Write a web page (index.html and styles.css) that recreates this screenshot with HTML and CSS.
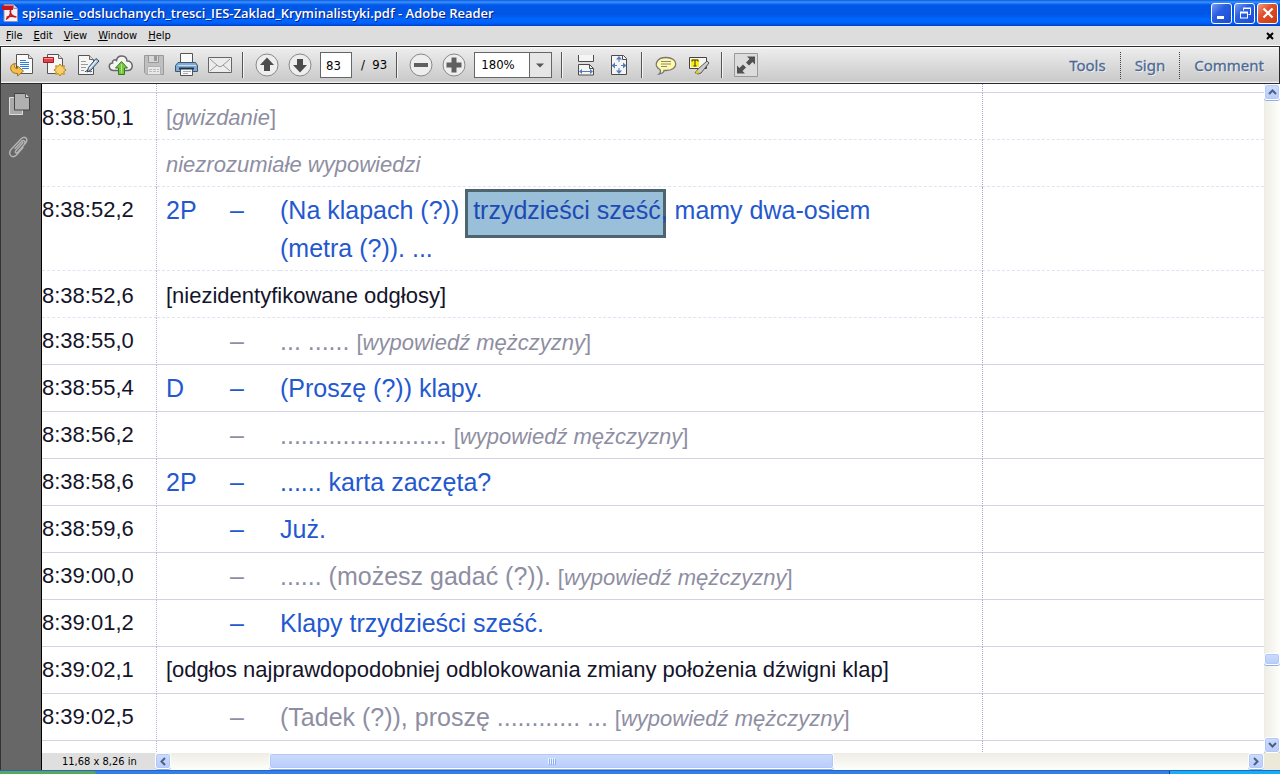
FILE: index.html
```html
<!DOCTYPE html>
<html lang="pl">
<head>
<meta charset="utf-8">
<title>spisanie_odsluchanych_tresci_IES-Zaklad_Kryminalistyki.pdf - Adobe Reader</title>
<link rel="stylesheet" href="styles.css">
</head>
<body>
<header class="titlebar">
  <svg class="app-icon" width="18" height="18" viewBox="0 0 18 18" aria-hidden="true">
    <path d="M3 .5h9.500l4 4v13H3z" fill="#f4f2f4" stroke="#9a8fb0"/>
    <path d="M12.500 .5v4h4" fill="#d8d4dc" stroke="#9a8fb0"/>
    <path d="M1 1.500h11v4.500H1z" fill="#c8161d"/>
    <path d="M5 15.500c3-2 5-6 4.500-9.500M9 7c.5 3 3 5.500 6.500 6M5.500 13.500c3-1.500 6-1.500 9-.5" fill="none" stroke="#c8161d" stroke-width="1.500"/>
  </svg>
  <h1 class="title">spisanie_odsluchanych_tresci_IES-Zaklad_Kryminalistyki.pdf - Adobe Reader</h1>
  <div class="window-buttons">
    <button class="win-btn" aria-label="Minimize"><svg width="18" height="18" viewBox="0 0 18 18"><path d="M4 12h7v3H4z" fill="#fff"/></svg></button>
    <button class="win-btn" aria-label="Restore"><svg width="18" height="18" viewBox="0 0 18 18"><path d="M4 7.500h8v7H4zM5 9.500v4h6v-4z" fill="#fff" fill-rule="evenodd"/><path d="M7.500 6.500V4.500h7v6h-2M7 4h8" fill="none" stroke="#fff"/></svg></button>
    <button class="win-btn close" aria-label="Close"><svg width="18" height="18" viewBox="0 0 18 18"><path d="M4.500 4.500l9 9M13.500 4.500l-9 9" stroke="#fff" stroke-width="2.200"/></svg></button>
  </div>
</header>
<nav class="menubar">
  <button class="menu"><u>F</u>ile</button>
  <button class="menu"><u>E</u>dit</button>
  <button class="menu"><u>V</u>iew</button>
  <button class="menu"><u>W</u>indow</button>
  <button class="menu"><u>H</u>elp</button>
  <button class="doc-close" aria-label="Close document"><svg width="8" height="8" viewBox="0 0 8 8"><path d="M1 1l6 6M7 1L1 7" stroke="#000" stroke-width="2"/></svg></button>
</nav>
<div class="toolbar">
  <button class="tool" aria-label="Open"><svg width="24" height="24" viewBox="0 0 24 24">
    <path d="M6.500 1.500h12l4 4v15h-16z" fill="#fafafa" stroke="#555"/>
    <path d="M18.500 1.500v4h4" fill="#ddd" stroke="#666"/>
    <path d="M10 7.500h6M10 9.500h9M10 11.500h9M10 13.500h9M12 15.500h7" stroke="#2f7ce8"/>
    <path d="M5.500 10.500C1 11 0 14 1 17c1 2.500 3 3.500 6.500 3.500V23l6-5-6-5v2.500c-3 0-4-2-2-5z" fill="#f3bf4a" stroke="#a5711a"/></svg></button>
  <button class="tool" aria-label="Create PDF"><svg width="24" height="24" viewBox="0 0 24 24">
    <path d="M4.500 1.500h11l4 4v15h-15z" fill="#f6f6f6" stroke="#555"/>
    <path d="M15.500 1.500v4h4" fill="#ddd" stroke="#666"/>
    <path d="M.5 4.500h10v5H.5z" fill="#e8404a" stroke="#a81820"/><path d="M1 5.500h9" stroke="#f59a96"/>
    <path d="M17 11l1.600 2.300 2.700-.6-.5 2.700 2.300 1.600-2.300 1.600.5 2.700-2.700-.6L17 23l-1.600-2.300-2.700.6.5-2.700-2.300-1.600 2.300-1.600-.5-2.700 2.700.6z" fill="#f9cf67" stroke="#ba861d"/></svg></button>
  <button class="tool" aria-label="Edit document"><svg width="24" height="24" viewBox="0 0 24 24">
    <path d="M2.500 2.500h11l4 4v15h-15z" fill="#f6f6f6" stroke="#555"/>
    <path d="M13.500 2.500v4h4" fill="#ddd" stroke="#666"/>
    <path d="M5 8.500h5M5 11.500h7M5 14.500h5M5 17.500h3" stroke="#999"/>
    <path d="M9 19c2-3 2 1 4-1 1 1 2 1 3 0" fill="none" stroke="#333"/>
    <path d="M20 5.500l3 2.500-8 9-4 2 1.500-4.500z" fill="#aecbe8" stroke="#34495c"/><path d="M20 8l-6.500 7.500" stroke="#fff"/></svg></button>
  <button class="tool" aria-label="Upload"><svg width="26" height="24" viewBox="0 0 26 24">
    <path d="M6 17.500c-6 0-6-7-1.500-7.500C4 7 7 6 8.500 7.500 9.500 1.500 18.500 1.500 19 8c6-.5 7.500 9 1 9.500z" fill="#f4f4f4" stroke="#666" stroke-width="1.500"/>
    <path d="M13.500 8.500l6 6.500h-3v6.500h-6V15h-3z" fill="#74c643" stroke="#39791b"/><path d="M13.500 11v9" stroke="#b0e48d"/></svg></button>
  <button class="tool" aria-label="Save" disabled><svg width="24" height="24" viewBox="0 0 24 24">
    <path d="M2.500 2.500h19v19h-17l-2-2z" fill="#c0c0c0" stroke="#999"/>
    <path d="M6.500 2.500h10v7h-10z" fill="#d8d8d8" stroke="#999"/><path d="M12 3h3v5h-3z" fill="#999"/>
    <path d="M5.500 13.500h13v8h-13z" fill="#e8e8e8" stroke="#b0b0b0"/><path d="M7 16.500h10M7 18.500h10" stroke="#bbb" stroke-dasharray="3 1"/></svg></button>
  <button class="tool" aria-label="Print"><svg width="24" height="24" viewBox="0 0 24 24">
    <path d="M5.500 10V.5h12V10" fill="#fafafa" stroke="#555"/>
    <path d="M3 9.500h17.500l2 3v6H.5v-6z" fill="#83aad5" stroke="#395a70"/><path d="M3 12.500h18" stroke="#c6dfec"/>
    <path d="M5.500 15.500h12v7h-12z" fill="#fafafa" stroke="#555"/><path d="M4 15.500h15" stroke="#1d3648" stroke-width="2"/><path d="M8 18.500h8M8 20.500h5" stroke="#aaa"/></svg></button>
  <button class="tool" aria-label="Email"><svg width="24" height="24" viewBox="0 0 24 24">
    <path d="M.5 4.500h23v15H.5z" fill="#ececec" stroke="#666"/><path d="M2 6l8 7q2 1.500 4 0l8-7M2 18l7-6M22 18l-7-6" fill="none" stroke="#999"/></svg></button>
  <span class="sep"></span>
  <button class="tool" aria-label="Previous page"><svg width="24" height="24" viewBox="0 0 24 24"><circle cx="12" cy="12" r="11" fill="#eee" stroke="#888"/><path d="M12 4.500l7 7.500h-4v6H9v-6H5z" fill="#4c4c4c"/></svg></button>
  <button class="tool" aria-label="Next page"><svg width="24" height="24" viewBox="0 0 24 24"><circle cx="12" cy="12" r="11" fill="#eee" stroke="#888"/><path d="M12 19.500L5 12h4V6h6v6h4z" fill="#4c4c4c"/></svg></button>
  <label class="page-box"><input class="page" type="text" value="83" aria-label="Page"><span>/&nbsp; 93</span></label>
  <span class="sep"></span>
  <button class="tool" aria-label="Zoom out"><svg width="24" height="24" viewBox="0 0 24 24"><circle cx="12" cy="12" r="11" fill="#eee" stroke="#888"/><path d="M5 10h14v4H5z" fill="#606060"/></svg></button>
  <button class="tool" aria-label="Zoom in"><svg width="24" height="24" viewBox="0 0 24 24"><circle cx="12" cy="12" r="11" fill="#eee" stroke="#888"/><path d="M9.500 4.500h5v5h5v5h-5v5h-5v-5h-5v-5h5z" fill="#606060"/></svg></button>
  <div class="zoom-box">
    <select class="zoom" aria-label="Zoom level"><option>180%</option></select>
    <svg class="zoom-arrow" width="22" height="24" viewBox="0 0 22 24" aria-hidden="true"><path d="M0 0h22v24H0z" fill="#e6e6e6"/><path d="M.5 0v24" stroke="#666"/><path d="M7 10.500h8l-4 4z" fill="#555"/></svg>
  </div>
  <span class="sep"></span>
  <button class="tool" aria-label="Fit width"><svg width="24" height="24" viewBox="0 0 24 24"><path d="M4.500 2v6.500h15V2M4.500 22V11.500h11l4 4V22z" fill="#f5f5f5" stroke="#4c4c4c"/><path d="M15.500 11.500v4h4" fill="none" stroke="#4c4c4c"/><path d="M7 18.500h10" stroke="#557bb8"/><path d="M5 18.500l3-2.500v5zM19 18.500l-3-2.500v5z" fill="#557bb8"/></svg></button>
  <button class="tool" aria-label="Fit page"><svg width="24" height="24" viewBox="0 0 24 24"><path d="M4.500 2.500h12l3 3v16h-15z" fill="#f5f5f5" stroke="#4c4c4c"/><path d="M15.500 2.500v4h4" fill="none" stroke="#4c4c4c"/><path d="M12 5v4M12 15v4M6 12.500h4M14 12.500h4" stroke="#557bb8"/><path d="M12 3l3 3.500H9zM12 21l3-3.500H9zM4.500 12.500L8 9.500v6zM19.500 12.500L16 9.500v6z" fill="#557bb8"/></svg></button>
  <span class="sep"></span>
  <button class="tool" aria-label="Comment bubble"><svg width="24" height="24" viewBox="0 0 24 24"><path d="M12 4.500c13 0 13 13 0 13H10c0 2-3 3.500-5 3.500 1.500-1 2-2.500 1-4.500C-1 13.500 2 4.500 12 4.500z" fill="#fff9a8" stroke="#777" stroke-width="1.300"/><path d="M7 8.500h10M7 11h10M7 13.500h6" stroke="#888"/></svg></button>
  <button class="tool" aria-label="Highlight text"><svg width="24" height="24" viewBox="0 0 24 24"><path d="M2.500 4.500h17v11h-17z" fill="#f7f7f7" stroke="#444"/><path d="M4 6h8v8H4z" fill="#fff000"/><path d="M5 8.500V7h6v1.500M8 7v6M6.500 13h3" fill="none" stroke="#333"/><path d="M20 8l2 2-8 10-3 1-3-1 3-4z" fill="#ccc" stroke="#555"/><path d="M10 17l3 3-5 1z" fill="#e6c829"/></svg></button>
  <span class="sep"></span>
  <button class="tool" aria-label="Read mode"><svg width="24" height="24" viewBox="0 0 24 24"><path d="M.5 .5h23v23H.5z" fill="#dcdcdc" stroke="#999"/><path d="M13 3.500h8v8l-2.500-2.500-3.500 3.500-3-3L15.500 6zM11 20.500H3v-8l2.500 2.500L9 11.500l3 3L8.500 18z" fill="#505050"/></svg></button>
  <div class="panes">
    <button class="pane">Tools</button>
    <button class="pane">Sign</button>
    <button class="pane">Comment</button>
  </div>
</div>
<div class="workspace">
  <aside class="sidebar">
    <button class="side" aria-label="Page thumbnails"><svg width="22" height="24" viewBox="0 0 22 24"><path d="M1.500 5.500h13v17h-13z" fill="#aaa" stroke="#ddd"/><path d="M6.500 1.500h11l4 4v12.500h-15z" fill="#b0b0b0" stroke="#444"/><path d="M17.500 1.500v4h4" fill="#ddd" stroke="#555"/></svg></button>
    <button class="side" aria-label="Attachments"><svg width="22" height="24" viewBox="0 0 22 24"><path d="M15 7.500l-7 8c-1.500 2 0 3.500 2 1.500l8-9.500c2.500-4-1.500-7-4.500-4L3 14.500c-3.500 5 1 9.500 5.500 5.500L15 12.500M7 13.500L13.500 6.500c2-2 4.500-.5 3 2" fill="none" stroke="#b4b4b4" stroke-width="1.400" stroke-linecap="round"/></svg></button>
  </aside>
  <main class="document">
    <table class="transcript">
      <colgroup><col class="c-time"><col class="c-who"><col class="c-dash"><col class="c-text"><col></colgroup>
      <tbody>
      <tr class="lead"><td></td><td colspan="3"></td><td></td></tr>
      <tr class="dashed"><td>8:38:50,1</td><td colspan="3" class="note muted">[<i>gwizdanie</i>]</td><td></td></tr>
      <tr class="dashed"><td></td><td colspan="3" class="note muted"><i>niezrozumiałe wypowiedzi</i></td><td></td></tr>
      <tr class="dashed tall blue"><td>8:38:52,2</td><td>2P</td><td>–</td><td>(Na klapach (?)) &nbsp;<mark>trzydzieści sześć,</mark> mamy dwa-osiem<br>(metra (?)). ...</td><td></td></tr>
      <tr class="dashed"><td>8:38:52,6</td><td colspan="3" class="note">[niezidentyfikowane odgłosy]</td><td></td></tr>
      <tr class="muted"><td>8:38:55,0</td><td></td><td>–</td><td>... ...... <span class="remark">[<i>wypowiedź mężczyzny</i>]</span></td><td></td></tr>
      <tr class="blue"><td>8:38:55,4</td><td>D</td><td>–</td><td>(Proszę (?)) klapy.</td><td></td></tr>
      <tr class="muted"><td>8:38:56,2</td><td></td><td>–</td><td>........................ <span class="remark">[<i>wypowiedź mężczyzny</i>]</span></td><td></td></tr>
      <tr class="blue"><td>8:38:58,6</td><td>2P</td><td>–</td><td>...... karta zaczęta?</td><td></td></tr>
      <tr class="blue"><td>8:38:59,6</td><td></td><td>–</td><td>Już.</td><td></td></tr>
      <tr class="muted"><td>8:39:00,0</td><td></td><td>–</td><td>...... (możesz gadać (?)). <span class="remark">[<i>wypowiedź mężczyzny</i>]</span></td><td></td></tr>
      <tr class="blue"><td>8:39:01,2</td><td></td><td>–</td><td>Klapy trzydzieści sześć.</td><td></td></tr>
      <tr><td>8:39:02,1</td><td colspan="3" class="note">[odgłos najprawdopodobniej odblokowania zmiany położenia dźwigni klap]</td><td></td></tr>
      <tr class="muted"><td>8:39:02,5</td><td></td><td>–</td><td>(Tadek (?)), proszę ............ ... <span class="remark">[<i>wypowiedź mężczyzny</i>]</span></td><td></td></tr>
      <tr class="blue next"><td></td><td></td><td></td><td>Jedzcie</td><td></td></tr>
      </tbody>
    </table>
  </main>
  <div class="vscroll">
    <button class="arrow" aria-label="Scroll up"><svg width="9" height="8" viewBox="0 0 9 8"><path d="M1 6l3.500-3.500L8 6" fill="none" stroke="#4d6185" stroke-width="2"/></svg></button>
    <span class="v-before"></span><span class="v-thumb"></span><span class="v-after"></span>
    <button class="arrow" aria-label="Scroll down"><svg width="9" height="8" viewBox="0 0 9 8"><path d="M1 2l3.500 3.500L8 2" fill="none" stroke="#4d6185" stroke-width="2"/></svg></button>
  </div>
  <div class="hrow">
    <span class="size">11,68 x 8,26 in</span>
    <button class="arrow" aria-label="Scroll left"><svg width="8" height="9" viewBox="0 0 8 9"><path d="M6 1L2.500 4.500 6 8" fill="none" stroke="#4d6185" stroke-width="2"/></svg></button>
    <span class="h-before"></span><span class="h-thumb"><svg width="8" height="7" viewBox="0 0 8 7"><path d="M.5 0v6M2.500 0v6M4.500 0v6M6.500 0v6" stroke="#eef4fe"/><path d="M1.500 1v6M3.500 1v6M5.500 1v6M7.500 1v6" stroke="#8cb0f8"/></svg></span><span class="h-after"></span>
    <button class="arrow" aria-label="Scroll right"><svg width="8" height="9" viewBox="0 0 8 9"><path d="M2 1l3.500 3.500L2 8" fill="none" stroke="#4d6185" stroke-width="2"/></svg></button>
  </div>
  <span class="corner"></span>
</div>
<footer class="taskbar"><span class="start"></span><span class="tasks"></span><span class="tray"></span></footer>
</body>
</html>
```

FILE: styles.css
```css
* { box-sizing: border-box; }
body {
  margin: 0;
  height: 100vh;
  display: flex;
  flex-direction: column;
  overflow: hidden;
  background: #ddd;
  color: #000;
  font: 11px/14px "DejaVu Sans Condensed", "DejaVu Sans", sans-serif;
}
button { border: 0; padding: 0; background: none; color: inherit; font: inherit; }
svg { display: block; }

.titlebar {
  flex: none;
  height: 26px;
  display: flex;
  align-items: center;
  gap: 3px;
  padding: 0 2px 0 1px;
  background: linear-gradient(#0a5ae0, #3a92ff 2px, #0058e8 5px, #0055e5 14px, #0066ff 19px, #0061fa 23px, #0040c8);
}
.title {
  flex: 1;
  margin: 0;
  overflow: hidden;
  white-space: nowrap;
  color: #fff;
  font: 600 13px/18px "Open Sans", sans-serif;
  text-shadow: 1px 1px #0a1c80;
}
.window-buttons { display: flex; gap: 2px; }
.win-btn {
  width: 21px;
  height: 21px;
  display: grid;
  place-items: center;
  border: 1px solid #fff;
  border-radius: 3px;
  background: linear-gradient(135deg, #7a9cf0, #2a5fe2 40%, #1a4cd4);
}
.win-btn.close { background: linear-gradient(135deg, #f09a80, #e0502c 40%, #c83810); }

.menubar {
  flex: none;
  height: 20px;
  display: flex;
  align-items: center;
  gap: 11px;
  padding: 0 6px 0 6px;
  border-bottom: 1px solid #fff;
}
.menu { height: 19px; }
.doc-close { margin-left: auto; }

.toolbar {
  flex: none;
  height: 38px;
  display: flex;
  align-items: center;
  padding: 0 1px 0 4px;
  border: 1px solid #2b2b2b;
  background: linear-gradient(#fff, #ececec 2px, #cacaca 34px, #fff);
}
.tool { flex: none; width: 33px; height: 28px; display: grid; place-items: center; }
.sep { flex: none; width: 2px; height: 26px; margin: 0 6px; border-left: 1px solid #555; border-right: 1px solid #f4f4f4; }
.page-box { display: flex; align-items: center; gap: 9px; margin: 0 3px 0 4px; font-size: 13px; }
.page {
  width: 32px;
  height: 26px;
  padding: 0 5px;
  border: 1px solid #666;
  background: #fff;
  font: inherit;
}
.zoom-box { flex: none; position: relative; width: 78px; margin: 0 3px 0 4px; }
.zoom {
  appearance: none;
  display: block;
  width: 100%;
  height: 26px;
  padding: 0 6px;
  border: 1px solid #666;
  border-radius: 0;
  background: #fff;
  color: #000;
  font: inherit;
  font-size: 13px;
}
.zoom-arrow { position: absolute; top: 1px; right: 1px; pointer-events: none; }
.panes { display: flex; margin-left: auto; }
.pane {
  height: 27px;
  padding: 0 14px;
  color: #4b6a94;
  font: 15px/18px "Noto Sans", sans-serif;
  -webkit-text-stroke: 0.3px #4b6a94;
  text-shadow: 1px 1px #f4f4f4;
}
.pane + .pane { border-left: 1px dotted #444; }

.workspace {
  flex: 1;
  min-height: 0;
  display: grid;
  grid-template: minmax(0, 1fr) 17px / 42px minmax(0, 1fr) 16px;
}
.sidebar {
  grid-row: 1 / 3;
  display: flex;
  flex-direction: column;
  align-items: center;
  gap: 19px;
  padding: 8px 4px 0 0;
  border-left: 1px solid #333;
  border-right: 1px solid #000;
  background: #676767;
}

.document { overflow: hidden; background: #fff; }
.transcript {
  width: 100%;
  table-layout: fixed;
  border-collapse: separate;
  border-spacing: 0;
  color: #14142a;
  font: 25px/38px "Liberation Sans", Arial, sans-serif;
  white-space: nowrap;
}
.c-time { width: 115px; }
.c-who { width: 73px; }
.c-dash { width: 50px; }
.c-text { width: 702px; }
.transcript td { height: 47px; padding: 4px 0 0; border-bottom: 1px solid #d2d2e6; vertical-align: top; }
.transcript td:nth-child(2) { padding-left: 9px; }
.transcript td:first-child { padding-top: 4px; color: #14142a; border-right: 1px dotted #b4b4cc; font-size: 22px; }
.transcript td:last-child { border-left: 1px dotted #a8a8cc; }
.transcript td.note { padding-top: 4px; font-size: 22px; }
.transcript .dashed td { border-bottom: 1px dashed #dfe4f2; }
.transcript .dashed:not(.tall) td { padding-top: 6px; }
.transcript .lead td { height: 9px; padding: 0; }
.transcript .tall td { height: 84px; }
.muted { color: #8e8ea2; }
.blue { color: #2358cf; }
.remark { font-size: 22px; }
mark { position: relative; z-index: 0; background: none; color: #1d4bb5; }
mark::before {
  content: "";
  position: absolute;
  z-index: -1;
  inset: -7px 2px -14px -8px;
  border: 3px solid #4d656e;
  background: #9abfd8;
}

.vscroll { display: flex; flex-direction: column; background: linear-gradient(90deg, #eeede5, #fefefb); }
.arrow, .v-thumb, .h-thumb {
  flex: none;
  border: 1px solid #fff;
  border-radius: 3px;
  background: linear-gradient(#cddcfe, #b8cdfa);
  box-shadow: inset 0 0 0 1px #b4c8f6, 0 1px #8eaee6;
}
.arrow { width: 16px; height: 16px; display: grid; place-items: center; }
.v-before { flex: 553; }
.v-thumb { height: 12px; }
.v-after { flex: 72; }
.hrow { display: flex; background: linear-gradient(#eeede5, #fefefb); }
.size { flex: none; width: 113px; padding-left: 20px; background: #dfdfdf; font-size: 11px; line-height: 17px; }
.h-before { flex: 98; }
.h-thumb { flex: 564; height: 16px; display: grid; place-items: center; }
.h-after { flex: 414; }
.corner { background: #ece9d8; }

.taskbar { flex: none; height: 4px; display: flex; border-top: 1px solid #2a62c8; background: #3080ea; }
.start { width: 96px; border-radius: 0 4px 0 0; background: #58a858; }
.tasks { flex: 1; }
.tray { width: 111px; border-left: 1px solid #0a3a90; background: #12b0f4; }
```
